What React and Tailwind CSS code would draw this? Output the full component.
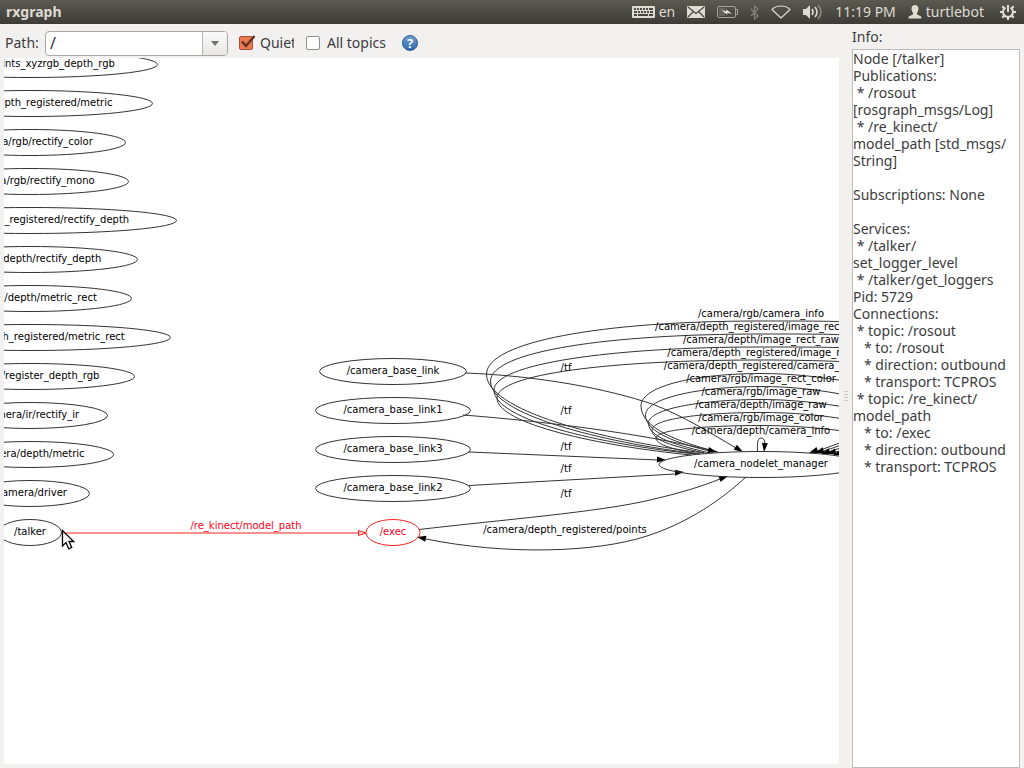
import React, { useState } from 'react';

const topicNodes = [
  { name: '/camera/points_xyzrgb_depth_rgb', y: 64, rx: 127.5 },
  { name: '/camera/depth_registered/metric', y: 103, rx: 122.5 },
  { name: '/camera/rgb/rectify_color', y: 142, rx: 95.5 },
  { name: '/camera/rgb/rectify_mono', y: 181, rx: 98.5 },
  { name: '/camera/depth_registered/rectify_depth', y: 220, rx: 146.5 },
  { name: '/camera/depth/rectify_depth', y: 259, rx: 107.5 },
  { name: '/camera/depth/metric_rect', y: 298, rx: 101.5 },
  { name: '/camera/depth_registered/metric_rect', y: 337, rx: 140.5 },
  { name: '/camera/register_depth_rgb', y: 376, rx: 104.5 },
  { name: '/camera/ir/rectify_ir', y: 415, rx: 77.5 },
  { name: '/camera/depth/metric', y: 454, rx: 83.5 },
  { name: '/camera/driver', y: 493, rx: 59.5 },
  { name: '/talker', y: 532, rx: 31.5 },
];

const nodes = [
  ...topicNodes.map((n) => ({ ...n, x: 30 })),
  { name: '/camera_base_link', x: 393, y: 371, rx: 73.5 },
  { name: '/camera_base_link1', x: 393, y: 410, rx: 77.5 },
  { name: '/camera_base_link3', x: 393, y: 449, rx: 77.5 },
  { name: '/camera_base_link2', x: 393, y: 488, rx: 77.5 },
  { name: '/exec', x: 393, y: 532, rx: 27, selected: true },
  { name: '/camera_nodelet_manager', x: 761, y: 464, rx: 102 },
];

const edges = [
  // tf
  'M466 373C540 376 608 389 652 404C684 416 712 434 736 448',
  'M463 415C540 421 640 433 709 450',
  'M469 452L658 460',
  'M469 485.500L675 474',
  // exec <-> nodelet manager
  'M419 529.500C500 520 600 512 650 500C680 493 700 487 720 479',
  'M746 477C722 499 690 522 647 536C595 553 505 555 426 539',
  // outer loops
  'M704 453C600 440 486 410 486.500 374C487 342 600 321 761 321C800 321 830 321 850 322',
  'M699 454C600 442 490 414 490.500 381C491 351 610 334 761 334C800 334 830 334 850 335',
  'M695 454C600 444 494 420 494 390C494 364 610 347 761 347C800 347 830 347 850 348',
  'M691 455C600 446 497 424 497 398C497 374 610 360 761 360C800 360 830 361 850 362',
  // inner loops
  'M718 452C678 442 641 428 641 406C641 385 700 373.500 761 373.500C792 373.500 822 377 850 382',
  'M714 452C678 444 645 432 645.500 415C646 397 704 386.500 761 386.500C792 386.500 822 390 850 396',
  'M710 453C680 446 648 438 648.500 423C649 408 706 399.500 761 399.500C792 399.500 822 403 850 408',
  'M705 453C682 448 652 442 652 430C652 418 708 412.500 761 412.500C792 412.500 822 415 850 420',
  'M700 454C682 451 656 446 656 438C656 429 712 425.500 761 425.500C792 425.500 822 428 850 432',
  // self loop
  'M757.500 451C757 442 758 438 761 438C764 438 765 441 765 445',
  // incoming on the right
  'M850 439L818 451',
  'M850 442L824 451',
  'M850 445L828 452',
  'M850 448L832 453',
];

// tip x, tip y, angle
const arrows = [
  [743, 452, 32],
  [717, 452, 13],
  [666, 460, 3],
  [684, 472, -5],
  [728, 476, -20],
  [417, 537, 191],
  [764, 452, 96],
  [809, 453, 160],
  [815, 453, 161],
  [821, 454, 162],
  [827, 454, 163],
  [833, 455, 165],
];

const edgeLabels = [
  { text: '/camera/rgb/camera_info', x: 761, y: 317 },
  { text: '/camera/depth_registered/image_rect_raw', x: 761, y: 330 },
  { text: '/camera/depth/image_rect_raw', x: 761, y: 343 },
  { text: '/camera/depth_registered/image_raw', x: 761, y: 356 },
  { text: '/camera/depth_registered/camera_info', x: 761, y: 369 },
  { text: '/camera/rgb/image_rect_color', x: 761, y: 382 },
  { text: '/camera/rgb/image_raw', x: 761, y: 395 },
  { text: '/camera/depth/image_raw', x: 761, y: 408 },
  { text: '/camera/rgb/image_color', x: 761, y: 421 },
  { text: '/camera/depth/camera_info', x: 761, y: 434 },
  { text: '/tf', x: 566, y: 371 },
  { text: '/tf', x: 566, y: 414 },
  { text: '/tf', x: 566, y: 450 },
  { text: '/tf', x: 566, y: 472 },
  { text: '/tf', x: 566, y: 497 },
  { text: '/camera/depth_registered/points', x: 565, y: 533 },
  { text: '/re_kinect/model_path', x: 246, y: 529, selected: true },
];

const info = `Node [/talker]
Publications:
 * /rosout
[rosgraph_msgs/Log]
 * /re_kinect/
model_path [std_msgs/
String]

Subscriptions: None

Services:
 * /talker/
set_logger_level
 * /talker/get_loggers
Pid: 5729
Connections:
 * topic: /rosout
   * to: /rosout
   * direction: outbound
   * transport: TCPROS
 * topic: /re_kinect/
model_path
   * to: /exec
   * direction: outbound
   * transport: TCPROS`;

const KeyboardIcon = () => (
  <svg width="23" height="12" viewBox="0 0 23 12" fill="#dfdbd2">
    <path
      fillRule="evenodd"
      d="M1 0h21a1 1 0 0 1 1 1v10a1 1 0 0 1-1 1H1a1 1 0 0 1-1-1V1a1 1 0 0 1 1-1zM2 2v2h2V2zM5 2v2h2V2zM8 2v2h2V2zM11 2v2h2V2zM14 2v2h2V2zM17 2v2h4V2zM2 5v2h3V5zM6 5v2h2V5zM9 5v2h2V5zM12 5v2h2V5zM15 5v2h2V5zM18 5v2h3V5zM2 8v2h3V8zM6 8v2h10V8zM17 8v2h4V8z"
    />
  </svg>
);

const MailIcon = () => (
  <svg width="18" height="12" viewBox="0 0 18 12">
    <rect width="18" height="12" rx="1" fill="#dfdbd2" />
    <path d="M1 1l8 6.500L17 1M1 11l5.500-5.500M17 11l-5.500-5.500" fill="none" stroke="#4a4843" strokeWidth="1.300" />
  </svg>
);

const BatteryIcon = () => (
  <svg width="21" height="12" viewBox="0 0 21 12">
    <rect x="0.500" y="0.500" width="18" height="11" rx="1.500" fill="none" stroke="#a5a29a" />
    <path d="M19 3.500h1.500v5H19" fill="none" stroke="#a5a29a" />
    <rect x="2" y="2" width="6" height="8" fill="#66645d" />
    <path d="M4.500 4l5 1.500L9 3.200l6 4.800-5-1.300.5 2.300z" fill="#f1eee6" />
  </svg>
);

const BluetoothIcon = () => (
  <svg width="9" height="15" viewBox="0 0 9 15" fill="none" stroke="#85827b" strokeWidth="1.200">
    <path d="M1 4l7 7-3.500 3V1L8 4l-7 7" />
  </svg>
);

const WifiIcon = () => (
  <svg width="20" height="14" viewBox="0 0 20 14" fill="none" stroke="#dfdbd2" strokeWidth="1.200">
    <path d="M1 4.500C5.500-.2 14.500-.2 19 4.500L10 13z" strokeLinejoin="round" />
  </svg>
);

const SoundIcon = () => (
  <svg width="20" height="16" viewBox="0 0 20 16" fill="none" strokeWidth="1.600">
    <path d="M0 5h3l4-4v14l-4-4H0z" fill="#dfdbd2" />
    <path d="M9 5q2 3 0 6" stroke="#dfdbd2" />
    <path d="M12 3q4 5 0 10" stroke="#dfdbd2" />
    <path d="M15 1q6 7 0 14" stroke="#8b8881" />
  </svg>
);

const UserIcon = () => (
  <svg width="14" height="14" viewBox="0 0 14 14" fill="#dfdbd2">
    <path d="M7 0c2.500 0 3.600 1.800 3.500 4C10.400 6 9.500 7.300 9 8v1.500c1.500 1 4.500 1 4.500 3.500v.5H.5V13c0-2.500 3-2.500 4.500-3.500V8c-.5-.7-1.400-2-1.500-4C3.400 1.800 4.500 0 7 0z" />
  </svg>
);

const PowerGearIcon = () => (
  <svg width="16" height="16" viewBox="0 0 16 16" fill="none" stroke="#dfdbd2">
    <path d="M5.500 3.700a5 5 0 1 0 5 0" strokeWidth="2" />
    <path d="M8 1v7" strokeWidth="2" />
    <path
      d="M13 8h3M0 8h3M8 13v3M11.500 11.500l2.200 2.200M4.500 11.500l-2.200 2.200M11.500 4.500l2.200-2.200M4.500 4.500L2.300 2.300"
      strokeWidth="2.200"
    />
  </svg>
);

const TopBar = () => (
  <header className="flex h-6 shrink-0 items-center justify-between bg-linear-to-b from-[#5c5a50] to-[#3c3b37] pl-1.5 pr-2 text-sm leading-6 text-[#dfdbd2]">
    <h1 className="text-sm leading-6 font-bold">rxgraph</h1>
    <div className="flex items-center gap-4">
      <div className="flex items-center gap-3">
        <span className="flex items-center gap-1">
          <KeyboardIcon />
          en
        </span>
        <MailIcon />
        <BatteryIcon />
        <BluetoothIcon />
        <WifiIcon />
        <SoundIcon />
        <time>11:19 PM</time>
        <span className="flex items-center gap-1">
          <UserIcon />
          turtlebot
        </span>
      </div>
      <PowerGearIcon />
    </div>
  </header>
);

const CheckOption = ({ id, label, checked, onChange, labelClass }) => (
  <div className="flex items-center gap-[7px]">
    <span className="relative flex">
      <input
        id={id}
        type="checkbox"
        checked={checked}
        onChange={onChange}
        className="size-3.5 appearance-none rounded-xs border border-[#918f8b] bg-white checked:border-[#a3503a] checked:bg-[#ee7850]"
      />
      {checked && (
        <svg className="pointer-events-none absolute -top-0.5 left-0" width="17" height="16" viewBox="0 0 17 16">
          <path d="M3 7.500l4 4.500L15.500 2" fill="none" stroke="#5f3226" strokeWidth="2.400" />
        </svg>
      )}
    </span>
    <label htmlFor={id} className={`overflow-hidden whitespace-nowrap ${labelClass}`}>
      {label}
    </label>
  </div>
);

const Toolbar = () => {
  const [path, setPath] = useState('/');
  const [quiet, setQuiet] = useState(true);
  const [allTopics, setAllTopics] = useState(false);

  return (
    <div className="flex h-[34px] shrink-0 items-center pt-1 pl-[5px]">
      <label htmlFor="path" className="w-10">
        Path:
      </label>
      <div className="flex h-[25px] w-[183px] overflow-hidden rounded-[4px] border border-[#a9a7a3] bg-white">
        <input
          id="path"
          value={path}
          onChange={(e) => setPath(e.target.value)}
          className="min-w-0 flex-1 px-1 text-base text-[#333] outline-none"
        />
        <button
          aria-label="Path history"
          className="flex w-[25px] items-center justify-center border-l border-[#b8b6b2] bg-linear-to-b from-[#fafafa] to-[#e9e8e7]"
        >
          <svg width="8" height="5" viewBox="0 0 8 5">
            <path d="M0 0h8L4 5z" fill="#73716e" />
          </svg>
        </button>
      </div>
      <div className="ml-[11px] flex items-center gap-3">
        <CheckOption
          id="quiet"
          label="Quiet"
          checked={quiet}
          onChange={() => setQuiet(!quiet)}
          labelClass="w-[34px]"
        />
        <CheckOption
          id="all-topics"
          label="All topics"
          checked={allTopics}
          onChange={() => setAllTopics(!allTopics)}
          labelClass="w-[61px]"
        />
        <button
          aria-label="Help"
          className="ml-0.5 flex size-4 items-center justify-center rounded-full border border-[#2b5a8c] bg-linear-to-b from-[#6d9fd0] to-[#2f6db0] text-[13px] leading-4 font-bold text-white"
        >
          ?
        </button>
      </div>
    </div>
  );
};

const Graph = () => (
  <svg className="block size-full font-['DejaVu_Sans',sans-serif] text-[10px]" textAnchor="middle">
    <g transform="translate(-4 -58)">
      <g fill="none" stroke="#333" strokeWidth="1">
        {edges.map((d) => (
          <path key={d} d={d} />
        ))}
      </g>
      {arrows.map(([x, y, angle]) => (
        <path
          key={`${x}-${y}`}
          d="M0 0L-9 -3V3z"
          transform={`translate(${x} ${y}) rotate(${angle})`}
          fill="#000"
        />
      ))}
      <path d="M61 533H358" stroke="#ff2020" />
      <path d="M366 533L358.500 530.500v5z" fill="#ffd0d0" stroke="#ff2020" />
      {nodes.map((n) => (
        <g key={n.name}>
          <ellipse
            cx={n.x}
            cy={n.y + 0.5}
            rx={n.rx}
            ry="13"
            fill="none"
            stroke={n.selected ? '#ff2020' : '#333'}
          />
          <text x={n.x} y={n.y + 3} fill={n.selected ? '#ff0020' : '#000'}>
            {n.name}
          </text>
        </g>
      ))}
      {edgeLabels.map((l) => (
        <text key={`${l.text}-${l.y}`} x={l.x} y={l.y} fill={l.selected ? '#ff0020' : '#000'}>
          {l.text}
        </text>
      ))}
      <path
        d="M62.500 530.500v15.500l3.500-3.400 2.800 6.200 2.900-1.300-2.700-6h4.700z"
        fill="#fff"
        stroke="#000"
        strokeWidth="1.300"
      />
    </g>
  </svg>
);

const App = () => {
  return (
    <div className="flex h-screen flex-col overflow-hidden bg-[#f2f1f0] font-['Noto_Sans',sans-serif] text-sm text-[#3c3c3c]">
      <TopBar />
      <div className="flex min-h-0 flex-1">
        <main className="flex min-w-0 flex-1 flex-col">
          <Toolbar />
          <div className="mb-1 ml-1 min-h-0 flex-1 overflow-hidden bg-white">
            <Graph />
          </div>
        </main>
        <div className="flex w-[13px] shrink-0 cursor-col-resize flex-col items-center justify-center gap-0.5">
          <span className="h-px w-1 bg-[#c9c7c4]" />
          <span className="h-px w-1 bg-[#c9c7c4]" />
          <span className="h-px w-1 bg-[#c9c7c4]" />
          <span className="h-px w-1 bg-[#c9c7c4]" />
        </div>
        <aside className="mr-1 flex w-[168px] shrink-0 flex-col">
          <label htmlFor="info" className="h-[25px] leading-[25px]">
            Info:
          </label>
          <textarea
            id="info"
            readOnly
            value={info}
            className="flex-1 resize-none overflow-hidden border border-[#bfbbb6] bg-white leading-[17px] whitespace-pre outline-none"
          />
        </aside>
      </div>
    </div>
  );
};

export default App;
